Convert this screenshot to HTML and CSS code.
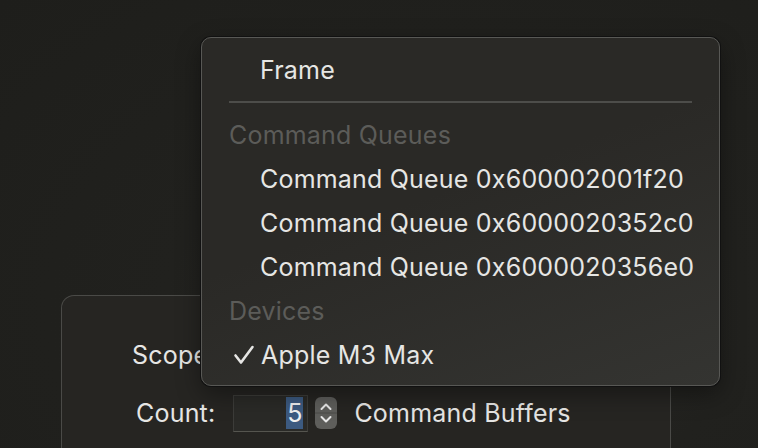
FILE: index.html
```html
<!DOCTYPE html>
<html>
<head>
<meta charset="utf-8">
<link rel="stylesheet" href="styles.css">
</head>
<body>
<div class="desktop">
  <div class="dialog">
    <div class="row scope-row"><span class="label">Scope</span></div>
    <div class="row count-row">
      <span class="label">Count:</span>
      <div class="field"><span class="sel">5</span></div>
      <div class="stepper">
        <svg width="22" height="32" viewBox="0 0 22 32"><path d="M6.5 12 L11 7.5 L15.5 12" fill="none" stroke="#e8e8e8" stroke-width="2" stroke-linecap="round" stroke-linejoin="round"/><path d="M6.5 20 L11 24.5 L15.5 20" fill="none" stroke="#e8e8e8" stroke-width="2" stroke-linecap="round" stroke-linejoin="round"/><line x1="0" y1="16" x2="22" y2="16" stroke="#4a4a48" stroke-width="1"/></svg>
      </div>
      <span class="unit">Command Buffers</span>
    </div>
  </div>
  <div class="menu">
    <div class="item first">Frame</div>
    <div class="sep"></div>
    <div class="header">Command Queues</div>
    <div class="item">Command Queue 0x600002001f20</div>
    <div class="item">Command Queue 0x6000020352c0</div>
    <div class="item">Command Queue 0x6000020356e0</div>
    <div class="header">Devices</div>
    <div class="item checked"><svg class="check" width="22" height="20" viewBox="0 0 22 20"><path d="M2.5 10.5 L8 17.5 L19.5 2" fill="none" stroke="#e6e6e4" stroke-width="2.6" stroke-linecap="round" stroke-linejoin="round"/></svg>Apple M3 Max</div>
  </div>
</div>
</body>
</html>
```
FILE: styles.css
```css
html, body { margin: 0; padding: 0; }
body {
  width: 758px; height: 448px; overflow: hidden;
  background: #1f1f1c;
  font-family: Inter, "Noto Sans", sans-serif;
  color: #e6e6e4;
}
.desktop {
  position: relative; width: 758px; height: 448px; overflow: hidden;
  background: radial-gradient(ellipse at 60% 70%, #2a2926 0%, #21211e 45%, #1e1e1b 100%);
}
.dialog {
  position: absolute; left: 61px; top: 295px; width: 610px; height: 153px;
  background: #262522;
  border: 1px solid #4a4a47;
  border-bottom: none;
  border-radius: 13px 13px 0 0;
  box-sizing: border-box;
}
.row { display: flex; align-items: center; position: absolute; }
.scope-row { left: 70px; top: 44px; height: 30px; }
.count-row { left: 74px; top: 98px; height: 38px; }
.label { font-size: 25px; letter-spacing: 0.2px; }
.count-row .label { margin-right: 18px; }
.field {
  width: 75px; height: 37px; box-sizing: border-box;
  background: #2a2a27;
  border: 1px solid #3c3c39;
  border-bottom-color: #55554f;
  display: flex; align-items: center; justify-content: flex-end;
  padding-right: 4px;
}
.sel { background: #3c5a80; color: #f0f0f0; font-size: 25px; line-height: 32px; padding: 0 1px; }
.stepper {
  margin-left: 7px; width: 22px; height: 32px;
  background: #5e5e5b; border-radius: 6px; overflow: hidden;
}
.stepper svg { display: block; }
.unit { margin-left: 17px; font-size: 25px; letter-spacing: 0.2px; }
.menu {
  position: absolute; left: 201px; top: 37px; width: 519px; height: 349px;
  box-sizing: border-box;
  border: 1px solid #585855;
  border-radius: 10px;
  background: linear-gradient(160deg, #2a2926 0%, #2a2926 45%, #343431 100%);
  box-shadow: 0 0 0 1px #111, 0 8px 24px rgba(0,0,0,0.4);
  padding: 10px 27px 0 27px;
}
.item {
  height: 44px; display: flex; align-items: center;
  padding-left: 31px; font-size: 25px; color: #e6e6e4; white-space: nowrap;
  letter-spacing: 0.2px;
}
.sep { height: 2px; background: #4d4d4a; margin: 9px 0 10px 0; }
.header {
  height: 44px; display: flex; align-items: center;
  font-size: 25px; color: #5c5c59; white-space: nowrap; letter-spacing: 0.2px;
}
.checked { padding-left: 4px; }
.check { display: block; margin-right: 6px; flex: none; }
```
